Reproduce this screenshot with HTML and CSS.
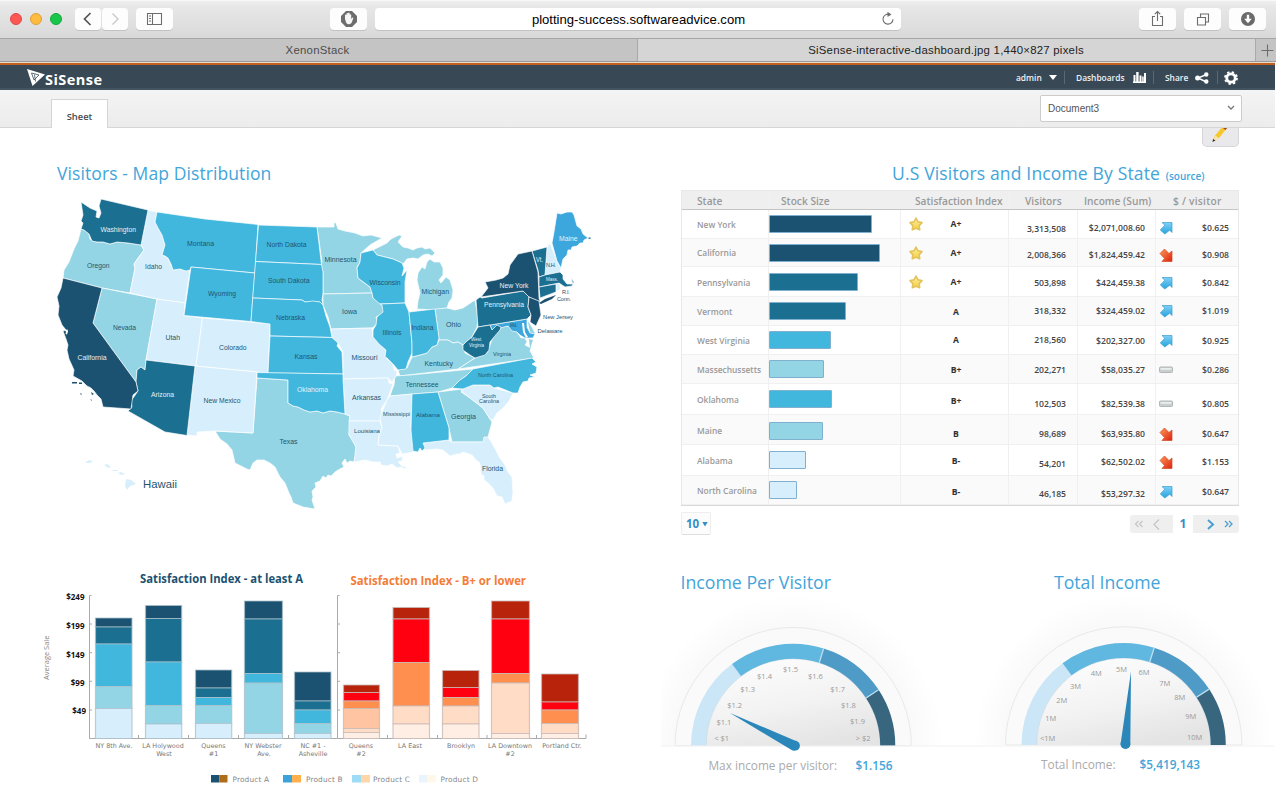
FILE: index.html
```html
<!DOCTYPE html>
<html lang="en">
<head>
<meta charset="utf-8">
<title>SiSense dashboard</title>
<link rel="stylesheet" href="styles.css">
</head>
<body>
<header class="toolbar">
  <div class="lights"><i class="red"></i><i class="amber"></i><i class="green"></i></div>
  <div class="pair">
    <span class="btn narrow"><svg width="26" height="22" viewBox="0 0 26 22"><path d="M15.500 5L9.500 11l6 6" class="stroke thick"/></svg></span>
    <span class="btn narrow"><svg width="26" height="22" viewBox="0 0 26 22"><path d="M10.500 5.500l5.500 5.500-5.500 5.500" class="stroke faint"/></svg></span>
  </div>
  <span class="btn side"><svg width="37" height="22" viewBox="0 0 37 22"><path d="M11.500 5.500h14v11h-14zM16.500 5.500v11M13 8h2M13 10.500h2M13 13h2" class="stroke"/></svg></span>
  <span class="btn hand"><svg width="37" height="22" viewBox="0 0 37 22"><path d="M16 3h6l5 5v6l-5 5h-6l-5-5V8z" fill="#6d6d6d"/><path d="M15 11V7q.8-1 1.500 0V5.500q.8-1 1.600 0V5q.8-.8 1.600 0v1.500q.8-.8 1.500.2V11l1-1.200q1-.5 1.200.3L21.500 15q-3 2.500-5.200 0z" fill="#f6f6f6"/></svg></span>
  <div class="url"><span>plotting-success.softwareadvice.com</span><svg class="reload" width="16" height="16" viewBox="0 0 16 16"><path d="M9.500 3.400A5 5 0 1 0 13 8.200" class="stroke"/><path d="M7.500.7l4 2.800-4 2.600z" fill="#6d6d6d"/></svg></div>
  <div class="actions">
    <span class="btn"><svg width="37" height="22" viewBox="0 0 37 22"><path d="M16 8.500h-2.500v9h10v-9H21M18.500 13V3.800M15.800 6.200l2.700-2.700 2.700 2.700" class="stroke"/></svg></span>
    <span class="btn"><svg width="37" height="22" viewBox="0 0 37 22"><path d="M13.500 9.500h8v7.500h-8zM16.500 9.500V6h8v8h-3" class="stroke"/></svg></span>
    <span class="btn"><svg width="37" height="22" viewBox="0 0 37 22"><circle cx="19" cy="11" r="7" fill="#6a6a6a"/><path d="M17.800 6.800h2.400v4h2.600L19 15.200l-3.800-4.400h2.600z" fill="#fff"/></svg></span>
  </div>
</header>
<nav class="tabs"><span class="tab">XenonStack</span><span class="tab active">SiSense-interactive-dashboard.jpg 1,440×827 pixels</span><span class="plus"><svg width="20" height="22" viewBox="0 0 20 22"><path d="M5.500 11.500h12M11.500 5.500v12" class="stroke"/></svg></span></nav>
<div class="app">
<div class="brandbar">
  <div class="brand"><svg width="19" height="20" viewBox="0 0 19 20"><path d="M0 1L18 6.500 5.500 18z" fill="#fff"/><path d="M4.500 5l7.500 2-5 5zM7.500 6.500l1 7" fill="none" stroke="#384955" stroke-width=".8"/></svg><b>SiSense</b></div>
  <div class="menu">
    <span class="m-admin">admin</span><svg class="caret" width="8" height="6" viewBox="0 0 8 6"><path d="M0 0h8L4 5z" fill="#fff"/></svg>
    <i class="sep"></i><span class="m-dash">Dashboards</span><svg width="13" height="11" viewBox="0 0 13 11"><path d="M0 9.500h13V11H0zM.5 3h2v6.500h-2zM3.200 0h2.400v9.500H3.200zM6.500 3.500h2v6h-2zM9.200 4.500h1.500v5H9.200zM11 1h2v8.500h-2z" fill="#fff"/></svg>
    <i class="sep"></i><span class="m-share">Share</span><svg width="14" height="12" viewBox="0 0 14 12"><path d="M11.500 2.500L3 6l8.500 4" stroke="#fff" stroke-width="1.400" fill="none"/><g fill="#fff"><circle cx="2.600" cy="6" r="2.500"/><circle cx="11.300" cy="2.500" r="2.200"/><circle cx="11.300" cy="9.500" r="2.200"/></g></svg>
    <i class="sep"></i><svg class="gear" width="14" height="14" viewBox="0 0 14 14"><circle cx="7" cy="7" r="4.200" fill="none" stroke="#fff" stroke-width="2.800"/><circle cx="7" cy="7" r="6" fill="none" stroke="#fff" stroke-width="1.800" stroke-dasharray="2.360"/></svg>
  </div>
</div>
<div class="sheetbar"><span class="sheet">Sheet</span><div class="select"><span>Document3</span><svg width="8" height="6" viewBox="0 0 8 6"><path d="M1 1l3 3 3-3" fill="none" stroke="#777" stroke-width="1.300"/></svg></div></div>
<main>
<section class="left">
<h2 class="map-title">Visitors - Map Distribution</h2>
<svg class="map" width="560" height="340" viewBox="50 190 560 340">
<g stroke="#fff" stroke-opacity=".85" stroke-width=".8" stroke-linejoin="round">
<g class="c3">
<path d="M81 229L84 230 89 234 90 239 92 241 97 242 103 242 110 244 117 242 128 243 141 245 144 250 138 258 134 264 135 268 130 293 102 288 63 278 64 270 69 262 74 249 78 241z"/>
<path d="M102 288L157 299 146 360 145 370 141 367 137 370 136 382 93 323z"/>
<path d="M317 227L334 227 334 222.500 336 223 338 229 345 231 355 233 363 236 371 235 382 238 370 245 361 253 360 262 357 267 358 278 363 282 370 287 372 293 323 294 323 272 320 266 322 262z"/>
<path d="M323 294L372 293 373 298 378 301 382 305 384 310 382 314 376 317 377 322 376 325 372 328 331 329 328 317 323 305z"/>
<path d="M257 378L288 380 288 403 293 406 298 407 304 410 310 412 317 411 323 413 330 411 337 412 345 414 350 416 349 435 353 440 356 447 356 454 354 462 350 461 347 463 345 459 342 463 344 467 338 470 335 472 331 476 328 475 326 478 323 476 320 481 315 483 316 487 312 491 313 497 312 500 315 509 303 507 293 503 291 497 289 493 285 483 280 477 275 467 270 463 264 460 257 460 253 463 250 470 247 469 235 463 232 450 227 444 220 439 215 431 253 433z"/>
<path d="M373 250L387 243 391 239 399 235 402 236 398 242 403 247 408 248 413 250 417 248 422 247 425 249 430 248 435 253 432 256 428 254 423 255 418 259 413 258 407 259 403 264 402 263 393 259 377 255z"/>
<path d="M417 309L418 301 420 293 417 280 418 273 422 267 425 269 427 262 430 259 434 262 440 262 443 268 443 275 439 280 441 283 446 277 450 280 453 290 452 298 449 302 447 308 435 310z"/>
<path d="M435 309L447 308 455 310 463 308 475 300 478 318 477 327 472 337 467 341 463 345 458 342 453 343 448 340 439 340z"/>
<path d="M412 357L420 355 427 353 432 347 437 345 439 340 448 340 453 343 458 342 463 345 465 353 475 358 458 369 400 376 398 370 407 368z"/>
<path d="M395 376L410 375 473 369 466 376 460 380 452 388 438 392 390 396 392 390 394 385z"/>
<path d="M458 369L475 358 487 353 493 337 500 327 508 326 517 332 521 338 525 338 527 342 525 345 531 348 530 351 534 358z"/>
<path d="M438 392L463 389 461 392 470 398 483 408 490 419 492 422 488 437 483 442 452 442 449 428z"/>
<path d="M527 319L532 327 535 333 534 336 530 334z"/>
</g>
<g class="c4">
<path d="M148 210L157 212 155 222 162 235 165 245 162 255 168 258 173 270 180 269 190 270 185 303 157 299 130 293 135 268 134 264 144 250 141 245z"/>
<path d="M157 299L185 303 184 315.500 202.500 318 196 366 146 360z"/>
<path d="M202.500 318L251 322 270 324 268 373 196 366z"/>
<path d="M195 366L257 372 253 433 215 431 197 432 197 436 187 435z"/>
<path d="M331 329L372 328 373 337 379 344 386 350 385 357 393 364 394 370 397 371 396 376 392 382 388 378 343 379 343 352 338 343 332 337z"/>
<path d="M343 379L388 378 389 383 393 384 387 400 381 409 382 413 380 421 349 421 350 416 345 414z"/>
<path d="M349 421L380 421 382 428 379 436 378 445 398 446 400 453 396 454 397 458 403 456 402 461 398 462 402 466 407 467 405 469 401 467 397 468 392 464 387 466 381 465 380 462 373 462 365 460 354 462 356 447 349 435z"/>
<path d="M390 396L412 394 411 427 414 452 402 454 398 446 378 445 379 436 382 428 380 417 387 400z"/>
<path d="M423 443L449 440 452 442 483 442 484 437 488 437 492 443 500 458 505 465 508 472 512 477 513 492 512 501 505 504 502 497 497 496 493 488 487 482 484 480 484 476 481 474 480 463 476 460 472 455 463 452 460 454 457 454 450 456 443 450 437 449 424 450z"/>
<path d="M461 391L466 387 473 385 490 385 494 388 513 393 509 401 503 408 497 413 493 420 490 419 483 408 470 398z"/>
<path d="M547 247L550 243 557 261 561 268 560 273 545 275z"/><path d="M556 283L560 284 560 290 556 291z"/>
</g>
<g class="c2">
<path d="M157 212L205 219 258 224.500 255 273 191 267 190 270 186 271 180 269 173 270 171 264 168 258 165 256 162 255 165 245 162 235 158 228 155 222z"/>
<path d="M191 267L255 273 251 321.500 184 315.500z"/>
<path d="M258.500 225L317 227 321.500 264.500 255.500 261.500z"/>
<path d="M255.500 261.500L321.500 264.500 323 272 323 293 322 300 323 305 320 302 313 302 305 302 302 300 252.700 298z"/>
<path d="M252.700 298L302 300 305 302 313 301 320 302 323 305 326 316 330 327 332 337.500 270 336 270 324 251 321.500z"/>
<path d="M270 336L332 337.500 338 343 337 346 342 352 343 374 268 373z"/>
<path d="M257 372.500L343 374 343 379 345 414 337 412 330 411 323 413 317 411 310 412 304 410 298 407 293 406 288 403 288 380 257 378z"/>
<path d="M361 253L373 250 377 255 393 259 402 263 404 268 402 276 407 270 405 282 405 303 380 304 373 298 372 293 370 287 358 278 357 268 360 262z"/>
<path d="M380 304L405 303 409 312 412 343 412 353 408 362 406 369 398 370 393 364 387 358 385 357 386 350 379 344 373 337 373 330 376 325 377 317 383 312 382 305z"/>
<path d="M409 312L435 309 439 338 437 345 432 347 427 353 420 355 412 357 412 343z"/>
<path d="M412 394L438 392 449 428 449 440 423 443 425 448 422 451 420 448 418 452 413 451 411 430z"/>
<path d="M452 388L460 380 466 376 473 369 532 358 536 362 532 364 537 367 536 373 530 375 535 377 529 378 528 381 523 382 520 387 518 393 513 393 498 387 494 388 490 385 473 385 463 389z"/>
</g>
<g class="cm"><path d="M552 243L554 232 557 213 561 214 567 212 572 212 574 215 577 226 581 229 583 234 588 238 584 240 583 243 580 243 577 246 572 247 571 250 568 250 567 255 563 259 561 268 557 261z"/>
<path d="M490 325L527 319 527 327 530 333 535 334 533 338 525 338 520 335 517 332 512 331 508 326 500 328 492 330z"/></g>
<g class="c1">
<path d="M81 202L84 204 90 208 97 211 96 217 99 218 101 213 99 206 101 199 148 210 141 245 128 243 117 242 110 244 103 242 97 242 92 241 89 234 84 230 81 229 83 223 81 221 83 215z"/>
<path d="M146 360L195 366 187 435.500 165 432 128 411 132 407 131 401 138 391 136 382 137 370 141 367 145 370z"/>
<path d="M476 300L480 297 482 298 523 291 529 297 528 307 531 315 527 319 478 327z"/>
<path d="M478 327L490 325 492 330 497 325 501 327 500 330 494 337 490 342 489 350 485 355 475 358 470 355 463 350 463 345 467 341 472 337z"/>
<path d="M532 251L547 247 545 275 539 277 538 270z"/>
<path d="M539 277L545 275 560 272 563 275 563 279 567 284 573 284 571 278 574 282 572 286 565 287 559 283 539 287z"/>
<path d="M539 287L556 284 556 292 540 298z"/>
</g>
<g class="c0">
<path d="M63 278L102 288 93 323 136 382 138 391 133 395 131 409 103 407 101 399 97 395 94 391 91 388 87 386 82 381 73 376 74 370 69 359 67 350 68 345 66 339 63 331 66 330 62 325 60 320 58 315 59 306 57 297 61 288z"/>
<path d="M481 297L488 288 485 282 496 280 503 278 508 274 510 265 518 254 532 251 538 272 539 298 540 302 529 297 523 291z"/>
<path d="M529 297L539 301 541 315 536 326 530 322 531 315 528 307z"/>
</g>
</g>
<path class="c0" d="M539 303l6-4 11-4-4 4-11 5zM72 382h5v1.500h-5zM79 382.500h3v1.500h-3zM80 393l2 1-1 1zM91 392l3 2-2 1zM90 399l2 1v1z"/>
<path class="c1" d="M588 238l2-.8 1 1-2 .8z"/><path fill="#fff" d="M65 330l2.500-.5.5 2-1 3-1.500-.5.500-2zM522 323h2l1 9 3 5-2 1-3-6z"/>
<path class="c3" d="M529 339l4 1-3 9z"/>
<path class="c4" d="M85 463l4-3 4 1-3 2zM104 465l3-1 4 3-3 1zM112 470h6v1h-5zM118 473l3-1 4 2-4 1zM126 479l5 1 5 4-6 2-3 4-2-4z"/>
<g class="ml">
<g class="lt"><text x="100.500" y="231.500" textLength="35.500" lengthAdjust="spacingAndGlyphs">Washington</text><text x="77.500" y="360" textLength="29" lengthAdjust="spacingAndGlyphs">California</text><text x="151" y="397" textLength="23" lengthAdjust="spacingAndGlyphs">Arizona</text><text x="297" y="391.500" textLength="31" lengthAdjust="spacingAndGlyphs">Oklahoma</text><text x="559" y="240.500" textLength="18.500" lengthAdjust="spacingAndGlyphs">Maine</text><text x="499.500" y="288" textLength="29" lengthAdjust="spacingAndGlyphs">New York</text><text x="484" y="307" textLength="40" lengthAdjust="spacingAndGlyphs">Pennsylvania</text><text x="536" y="261.500" textLength="7" lengthAdjust="spacingAndGlyphs">Vt.</text><text class="xs" x="546" y="281" textLength="12">Mass.</text><text class="xs" x="471" y="341">West</text><text class="xs" x="469" y="347" textLength="15" lengthAdjust="spacingAndGlyphs">Virginia</text></g>
<text x="87" y="268" textLength="22.500" lengthAdjust="spacingAndGlyphs">Oregon</text><text x="145" y="268.500" textLength="17" lengthAdjust="spacingAndGlyphs">Idaho</text><text x="187" y="246" textLength="27" lengthAdjust="spacingAndGlyphs">Montana</text><text x="208" y="295.500" textLength="28" lengthAdjust="spacingAndGlyphs">Wyoming</text><text x="113" y="329.500" textLength="23" lengthAdjust="spacingAndGlyphs">Nevada</text><text x="165.500" y="339.500" textLength="14.500" lengthAdjust="spacingAndGlyphs">Utah</text><text x="219" y="350" textLength="27.500" lengthAdjust="spacingAndGlyphs">Colorado</text><text x="203.500" y="403" textLength="37" lengthAdjust="spacingAndGlyphs">New Mexico</text>
<text x="266.500" y="247" textLength="40" lengthAdjust="spacingAndGlyphs">North Dakota</text><text x="268" y="283" textLength="41.500" lengthAdjust="spacingAndGlyphs">South Dakota</text><text x="276" y="320" textLength="29" lengthAdjust="spacingAndGlyphs">Nebraska</text><text x="294.500" y="359" textLength="23" lengthAdjust="spacingAndGlyphs">Kansas</text><text x="279.500" y="444" textLength="18" lengthAdjust="spacingAndGlyphs">Texas</text><text x="324.500" y="262" textLength="32" lengthAdjust="spacingAndGlyphs">Minnesota</text><text x="342" y="313.500" textLength="15" lengthAdjust="spacingAndGlyphs">Iowa</text><text x="369.500" y="284.500" textLength="31" lengthAdjust="spacingAndGlyphs">Wisconsin</text><text x="382.500" y="335" textLength="19" lengthAdjust="spacingAndGlyphs">Illinois</text><text x="411.500" y="330" textLength="22" lengthAdjust="spacingAndGlyphs">Indiana</text><text x="351.500" y="360" textLength="26" lengthAdjust="spacingAndGlyphs">Missouri</text><text x="352" y="399.500" textLength="29" lengthAdjust="spacingAndGlyphs">Arkansas</text><text class="s" x="354" y="432.500" textLength="26" lengthAdjust="spacingAndGlyphs">Louisiana</text><text class="s" x="383" y="416" textLength="27" lengthAdjust="spacingAndGlyphs">Mississippi</text><text class="s" x="416" y="416.500" textLength="24" lengthAdjust="spacingAndGlyphs">Alabama</text><text x="451" y="419" textLength="25" lengthAdjust="spacingAndGlyphs">Georgia</text><text x="482" y="470.500" textLength="21" lengthAdjust="spacingAndGlyphs">Florida</text><text x="421.500" y="293.500" textLength="27.500" lengthAdjust="spacingAndGlyphs">Michigan</text><text x="446" y="326.500" textLength="15" lengthAdjust="spacingAndGlyphs">Ohio</text><text x="424.500" y="366" textLength="28.500" lengthAdjust="spacingAndGlyphs">Kentucky</text><text x="405.500" y="387" textLength="33" lengthAdjust="spacingAndGlyphs">Tennessee</text><text class="s" x="493" y="356" textLength="18" lengthAdjust="spacingAndGlyphs">Virginia</text><text class="s" x="478" y="377" textLength="35" lengthAdjust="spacingAndGlyphs">North Carolina</text><text class="s" x="482" y="397.500" textLength="14" lengthAdjust="spacingAndGlyphs">South</text><text class="s" x="479" y="402.500" textLength="20" lengthAdjust="spacingAndGlyphs">Carolina</text><text class="s" x="546" y="266.500" textLength="10">N.H.</text><text class="s" x="562" y="294" textLength="8">R.I.</text><text class="s" x="557" y="301" textLength="14">Conn.</text><text class="s" x="543" y="318.500" textLength="30" lengthAdjust="spacingAndGlyphs">New Jersey</text><text class="s" x="537.500" y="332.500" textLength="25" lengthAdjust="spacingAndGlyphs">Delaware</text><text class="xs" x="510" y="327">Md.</text>
<text class="hi" x="143" y="487.500" textLength="34" lengthAdjust="spacingAndGlyphs">Hawaii</text>
</g>
</svg>
<svg class="chart" width="580" height="235" viewBox="30 560 580 235">
<g class="ct"><text x="140" y="583" fill="#1c5271" textLength="163" lengthAdjust="spacingAndGlyphs">Satisfaction Index - at least A</text><text x="350.500" y="584.500" fill="#f47c35" textLength="175.500" lengthAdjust="spacingAndGlyphs">Satisfaction Index - B+ or lower</text></g>
<path d="M91.500 595.500H89.500V738.500H337.500V595.500h2M337.500 738.500H586v-4M89.500 624h2.500M89.500 652.700h2.500M89.500 681.300h2.500M89.500 710h2.500M337.500 624h2.500M337.500 652.700h2.500M337.500 681.300h2.500M337.500 710h2.500M138.500 738v-3M188.500 738v-3M238.500 738v-3M288.500 738v-3M387.500 738v-3M437.500 738v-3M487 738v-3M536.500 738v-3" fill="none" stroke="#aaa" stroke-width="1"/>
<g class="cy"><text x="84.500" y="600">$249</text><text x="84.500" y="628.500">$199</text><text x="84.500" y="658">$149</text><text x="84.500" y="685.500">$99</text><text x="86" y="713.500">$49</text></g>
<text class="avg" transform="translate(48.500 680) rotate(-90)" textLength="44.500">Average Sale</text>
<g stroke="#a9bfca" stroke-opacity=".75" stroke-width="1.200">
<g class="c0"><path d="M95.500 618H132v9H95.500zM145.500 605.500h36.200v13h-36.200zM195.500 670h36.200v18h-36.200zM244.500 601h38v18h-38zM294.500 672h36.500v29h-36.500z"/></g>
<g class="c1"><path d="M95.500 627H132v17H95.500zM145.500 618.500h36.200V662h-36.200zM195.500 688h36.200v9.500h-36.200zM244.500 619h38v54.500h-38zM294.500 701h36.500v9h-36.500z"/></g>
<g class="c2"><path d="M95.500 644H132v42.500H95.500zM145.500 662h36.200v43.500h-36.200zM195.500 697.500h36.200v8h-36.200zM244.500 673.500h38v9.500h-38zM294.500 710h36.500v13.500h-36.500z"/></g>
<g class="c3"><path d="M95.500 686.500H132v22H95.500zM145.500 705.500h36.200V724h-36.200zM195.500 705.500h36.200v18h-36.200zM244.500 683h38v50.500h-38zM294.500 723.500h36.500v10h-36.500z"/></g>
<g class="c4"><path d="M95.500 708.500H132v30H95.500zM145.500 724h36.200v14.500h-36.200zM195.500 723.500h36.200v15h-36.200zM244.500 733.500h38v5h-38zM294.500 733.500h36.500v5h-36.500z"/></g>
</g>
<g stroke="#c9b9b5" stroke-opacity=".8" stroke-width="1.200">
<path fill="#b8230c" d="M343.500 685h36v7.500h-36zM393 607.500h36.500V619H393zM442.500 670.500H479v17h-36.500zM491.500 601h38v18h-38zM541.500 674h37v28h-37z"/>
<path fill="#ff0010" d="M343.500 692.500h36v8.500h-36zM393 619h36.500v43.500H393zM442.500 687.500H479v10h-36.500zM491.500 619h38v54.500h-38zM541.500 702h37v8h-37z"/>
<path fill="#ff8f4e" d="M343.500 701h36v7.500h-36zM393 662.500h36.500V706H393zM442.500 697.500H479v8.500h-36.500zM491.500 673.500h38v9.500h-38zM541.500 710h37v13.500h-37z"/>
<path fill="#ffc5a3" d="M343.500 708.500h36v20h-36z"/>
<path fill="#ffdcc6" d="M343.500 728.500h36v4h-36zM393 706h36.500v18H393zM442.500 706H479v18h-36.500zM491.500 683h38v50.500h-38zM541.500 723.500h37v10h-37z"/>
<path fill="#ffeee3" d="M343.500 732.500h36v6h-36zM393 724h36.500v14.500H393zM442.500 724H479v14.500h-36.500zM491.500 733.500h38v5h-38zM541.500 733.500h37v5h-37z"/>
</g>
<g class="cx"><text x="114" y="748">NY 8th Ave.</text><text x="163" y="748">LA Holywood</text><text x="164" y="756">West</text><text x="213.500" y="748">Queens</text><text x="213.500" y="756">#1</text><text x="263" y="748">NY Webster</text><text x="264" y="756">Ave.</text><text x="313" y="748">NC #1 -</text><text x="313" y="756">Asheville</text><text x="361" y="748">Queens</text><text x="361" y="756">#2</text><text x="410" y="748">LA East</text><text x="461" y="748">Brooklyn</text><text x="510" y="748">LA Downtown</text><text x="510" y="756">#2</text><text x="562" y="748">Portland Ctr.</text></g>
<path fill="#1c5271" d="M211 775h8.500v7.500H211z"/><path fill="#b06d19" d="M219.500 775h8v7.500h-8z"/><path fill="#3ba3dc" d="M283 775h9v7.500h-9z"/><path fill="#ffb04b" d="M292 775h9v7.500h-9z"/><path fill="#9ddcf4" d="M352 775h9v7.500h-9z"/><path fill="#ffd7a6" d="M361 775h9v7.500h-9z"/><path fill="#e9f4fd" d="M419 775h8.500v7.500H419z"/><path fill="#fff8e8" d="M427.500 775h8.500v7.500h-8.500z"/>
<g class="lg"><text x="232.500" y="782" textLength="36.500">Product A</text><text x="306" y="782" textLength="36.500">Product B</text><text x="373" y="782" textLength="37">Product C</text><text x="440.500" y="782" textLength="37.500">Product D</text></g>
</svg>
</section>
<section class="right">
<div class="edit"><svg width="37" height="20" viewBox="0 0 37 20"><path d="M10 12l2-4.500L18.500 0h5.500l-8 10z" fill="#f7c62b"/><path d="M12 7.500l4 2.500-1.500 2-4 1z" fill="#f6e3b5"/><path d="M10 11l2.500 1.500L9.500 14z" fill="#333"/><path d="M20 0h4l-1.500 2z" fill="#a33b35"/></svg></div>
<h2 class="table-title"><span>U.S Visitors and Income By State</span> <small>(source)</small></h2>
<svg width="0" height="0" class="defs"><defs>
<linearGradient id="gb" x2="0" y2="1"><stop offset="0" stop-color="#7fd0f7"/><stop offset="1" stop-color="#27a3dd"/></linearGradient><linearGradient id="gr" x2="1" y2="1"><stop offset="0" stop-color="#ff9a55"/><stop offset="1" stop-color="#dc2210"/></linearGradient><linearGradient id="gs" x2="0" y2="1"><stop offset="0" stop-color="#ffee9a"/><stop offset="1" stop-color="#f3cf42"/></linearGradient>
<symbol id="up" viewBox="0 0 14 14"><path d="M3 1.500h10v10l-2.300-2.300L5.800 13 1.300 9l4.500-4.800z" fill="url(#gb)" stroke="#3b9dcf" stroke-width=".7"/></symbol>
<symbol id="down" viewBox="0 0 14 14"><path d="M5.500 1l4.500 4.500L13 3v10.500H3l2.500-3L1 5.500z" fill="url(#gr)" stroke="#cf4a25" stroke-width=".7"/></symbol>
<symbol id="flat" viewBox="0 0 14 14"><rect x=".5" y="4" width="13" height="5.500" rx="1" fill="#c9cfcf" stroke="#b1b7b7"/><path d="M1.500 5h11v1.800h-11z" fill="#e9eded"/></symbol>
<symbol id="star" viewBox="0 0 14 14"><path d="M7 1.200l2 3.600 4 .8-2.800 3 .5 4.200L7 11.300l-3.700 1.500.5-4.200-2.800-3 4-.8z" fill="url(#gs)" stroke="#e3c25c" stroke-width="1.600" stroke-linejoin="round"/></symbol>
</defs></svg>
<div class="table">
<div class="row head"><span class="ha">State</span><span class="hb">Stock Size</span><span class="hc">Satisfaction Index</span><span class="hd">Visitors</span><span class="he">Income (Sum)</span><span class="hf">$ / visitor</span></div>
<div class="row h28"><span class="st">New York</span><span><i class="bar b0" style="width:103px"></i></span><span class="gd"><svg><use href="#star"/></svg><b>A+</b></span><span class="vi n5">3,313,508</span><span class="in n4">$2,071,008.60</span><span class="pv n4"><svg><use href="#up"/></svg><b>$0.625</b></span></div>
<div class="row alt"><span class="st">California</span><span><i class="bar b0" style="width:111px"></i></span><span class="gd"><svg><use href="#star"/></svg><b>A+</b></span><span class="vi n2">2,008,366</span><span class="in n2">$1,824,459.42</span><span class="pv n2"><svg><use href="#down"/></svg><b>$0.908</b></span></div>
<div class="row"><span class="st n1">Pennsylvania</span><span><i class="bar b1" style="width:89px"></i></span><span class="gd"><svg><use href="#star"/></svg><b>A+</b></span><span class="vi n1">503,898</span><span class="in n1">$424,459.38</span><span class="pv n1"><svg><use href="#up"/></svg><b>$0.842</b></span></div>
<div class="row alt h30"><span class="st">Vermont</span><span><i class="bar b1" style="width:77px"></i></span><span class="gd n1"><b>A</b></span><span class="vi">318,332</span><span class="in">$324,459.02</span><span class="pv"><svg><use href="#up"/></svg><b>$1.019</b></span></div>
<div class="row h28"><span class="st">West Virginia</span><span><i class="bar b2" style="width:62px"></i></span><span class="gd"><b>A</b></span><span class="vi">218,560</span><span class="in n1">$202,327.00</span><span class="pv n1"><svg><use href="#up"/></svg><b>$0.925</b></span></div>
<div class="row alt h30"><span class="st">Massechussetts</span><span><i class="bar b3" style="width:55px"></i></span><span class="gd n1"><b>B+</b></span><span class="vi n1">202,271</span><span class="in n1">$58,035.27</span><span class="pv n1"><svg><use href="#flat"/></svg><b>$0.286</b></span></div>
<div class="row h30"><span class="st">Oklahoma</span><span><i class="bar b2" style="width:63px"></i></span><span class="gd n2"><b>B+</b></span><span class="vi n5">102,503</span><span class="in n5">$82,539.38</span><span class="pv n5"><svg><use href="#flat"/></svg><b>$0.805</b></span></div>
<div class="row alt h31"><span class="st n1">Maine</span><span class="n1"><i class="bar b3" style="width:54px"></i></span><span class="gd n4"><b>B</b></span><span class="vi n4">98,689</span><span class="in n4">$63,935.80</span><span class="pv n4"><svg><use href="#down"/></svg><b>$0.647</b></span></div>
<div class="row h30"><span class="st">Alabama</span><span><i class="bar b4" style="width:37px"></i></span><span class="gd n1"><b>B-</b></span><span class="vi n4">54,201</span><span class="in n2">$62,502.02</span><span class="pv n2"><svg><use href="#down"/></svg><b>$1.153</b></span></div>
<div class="row alt h30"><span class="st">North Carolina</span><span><i class="bar b4" style="width:28px"></i></span><span class="gd n2"><b>B-</b></span><span class="vi n4">46,185</span><span class="in n4">$53,297.32</span><span class="pv n2"><svg><use href="#up"/></svg><b>$0.647</b></span></div>
</div>
<div class="pager"><span class="size">10 <svg width="6" height="6" viewBox="0 0 6 6"><path d="M.3 1h5.400L3 5.500z" fill="#348ec6"/></svg></span>
<div class="pages"><svg width="43" height="18" viewBox="0 0 43 18"><path d="M8.500 6L5.500 9l3 3M12.500 6L9.500 9l3 3M29 4.500L24 9.500l5 5" class="pgoff"/></svg><b>1</b><svg width="46" height="18" viewBox="0 0 46 18"><path d="M15 5l5 4.500-5 4.500" class="pgon big"/><path d="M32 6l3 3-3 3M36 6l3 3-3 3" class="pgon"/></svg></div></div>
<svg class="gauges" width="614" height="235" viewBox="661 560 614 235">
<defs><radialGradient id="halo" gradientUnits="userSpaceOnUse" cx="793" cy="745" r="150"><stop offset=".7" stop-color="#f7f7f7"/><stop offset="1" stop-color="#fff"/></radialGradient>
<linearGradient id="face" x1=".2" y1="0" x2=".6" y2="1"><stop offset="0" stop-color="#fdfdfd"/><stop offset=".55" stop-color="#f3f3f3"/><stop offset="1" stop-color="#e4e4e4"/></linearGradient>
<g id="dial"><path d="M643 745.700a150 150 0 0 1 300 0z" fill="url(#halo)"/><path d="M675 745.700a118 118 0 0 1 236.400 0z" fill="#fafafa" stroke="#e9e9e9"/><path d="M704 745.700a89 89 0 0 1 178.400 0z" fill="url(#face)"/><path d="M704.200 745.700a89 89 0 0 1 178 0" fill="none" stroke="#c3d2da" stroke-width="5" opacity=".6"/>
<path fill="#cbe6f6" d="M691 745.700A102.200 102.200 0 0 1 732 664L741 676A87 87 0 0 0 706 745.700z"/><path fill="#60b7e0" d="M732 664A102 102 0 0 1 823.700 648.400L819.200 662.700A87 87 0 0 0 741 676z"/><path fill="#4f9bc8" d="M823.700 648.400A102 102 0 0 1 878.600 689.800L866 698A87 87 0 0 0 819.200 662.700z"/><path fill="#38667f" d="M878.600 689.800A102 102 0 0 1 895.300 745.700H880.200A87 87 0 0 0 866 698z"/><path d="M823.700 648.400L819.200 662.700M878.600 689.800L866 698" stroke="#b9dff2" stroke-width="1.300"/></g></defs>
<use href="#dial"/><use href="#dial" x="330.500" y="-.7"/>
<path d="M661 746H1275" stroke="#f1f1f1"/>
<path fill="#2b87ba" d="M730 713L796.500 741.300A5.200 5.200 0 0 1 792.500 750.500z"/><circle cx="795" cy="745.700" r="4.900" fill="#2b87ba"/>
<path fill="#2b87ba" d="M1131 671.500L1130.300 745A5 5 0 0 1 1120.600 744z"/><circle cx="1125.400" cy="744" r="4.900" fill="#2b87ba"/>
<g class="gt"><text x="680.500" y="589" textLength="150.500" lengthAdjust="spacingAndGlyphs">Income Per Visitor</text><text x="1054" y="589" textLength="106.500" lengthAdjust="spacingAndGlyphs">Total Income</text></g>
<g class="gl"><text x="721.600" y="741">&lt; $1</text><text x="723.900" y="724.500">$1.1</text><text x="734.600" y="708">$1.2</text><text x="747.600" y="691.500">$1.3</text><text x="764.500" y="679">$1.4</text><text x="790.500" y="672">$1.5</text><text x="815.400" y="679">$1.6</text><text x="837.600" y="691.500">$1.7</text><text x="848.300" y="707.500">$1.8</text><text x="857.500" y="723.500">$1.9</text><text x="863.200" y="740.500">&gt; $2</text>
<text x="1047.700" y="741">&lt;1M</text><text x="1050.700" y="721">1M</text><text x="1061.800" y="703">2M</text><text x="1075.600" y="689">3M</text><text x="1096.300" y="675.500">4M</text><text x="1121.500" y="672">5M</text><text x="1144" y="675">6M</text><text x="1164.800" y="685.500">7M</text><text x="1179.700" y="700">8M</text><text x="1190.800" y="719">9M</text><text x="1194.600" y="739.500">10M</text></g>
<g class="gf"><text x="708.500" y="770" textLength="128.500" lengthAdjust="spacingAndGlyphs">Max income per visitor:</text><text class="val" x="855.500" y="770" textLength="37" lengthAdjust="spacingAndGlyphs">$1.156</text><text x="1041" y="769" textLength="74.500" lengthAdjust="spacingAndGlyphs">Total Income:</text><text class="val" x="1139.500" y="769" textLength="60.500" lengthAdjust="spacingAndGlyphs">$5,419,143</text></g>
</svg>
</section>
</main>
</div>
</body>
</html>
```
FILE: styles.css
```css
* { box-sizing: border-box; }
body { margin: 0; width: 1276px; height: 795px; overflow: hidden; background: #fff; font-family: "Open Sans", "Noto Sans", sans-serif; }
svg { display: block; flex: none; }
.stroke { fill: none; stroke: #6d6d6d; stroke-width: 1.1; }
.stroke.thick { stroke-width: 1.7; stroke: #555; }
.stroke.faint { stroke: #c9c9c9; stroke-width: 1.4; }

.toolbar { display: flex; align-items: center; height: 38px; padding: 0 10px 1px; background: linear-gradient(#efefef, #e7e7e7 15%, #d9d9d9); border-top: 1px solid #f8f8f8; }
.lights { display: flex; gap: 8px; width: 65px; }
.lights i { width: 12px; height: 12px; border-radius: 50%; border: 1px solid; }
.red { background: #fc5753; border-color: #df4744 !important; }
.amber { background: #fdbc40; border-color: #de9f34 !important; }
.green { background: #18c64a; border-color: #15a83b !important; }
.pair { display: flex; gap: 1px; margin-right: 8px; }
.btn { width: 37px; height: 22px; background: #fdfdfd; border-radius: 4px; box-shadow: 0 1px 0 #c2c2c2; }
.btn.narrow { width: 26px; }
.hand { margin-left: 157px; }
.url { display: flex; align-items: center; width: 526px; height: 22px; margin-left: 8px; padding-right: 5px; background: #fff; border-radius: 4px; box-shadow: 0 1px 0 #c2c2c2; font: 13.1px "Liberation Sans", Arial, sans-serif; }
.url span { flex: 1; text-align: center; padding-left: 22px; }
.actions { display: flex; gap: 8px; margin-left: auto; }

.tabs { display: flex; height: 24px; border-top: 1px solid #a6a6a6; border-bottom: 1px solid #999; font: 11.4px/23px "Liberation Sans", Arial, sans-serif; letter-spacing: .24px; color: #4c4c4c; background: #c4c4c4; }
.tab { width: 637px; padding-right: 2px; text-align: center; }
.tab.active { width: 619px; padding: 0 1px 0 0; background: #d5d5d5; border: solid #a9a9a9; border-width: 0 1px; color: #222; }

.app { width: 1275px; padding-top: 1px; background: linear-gradient(#e9dccb 1px, #fff 1px); }
.brandbar { display: flex; align-items: center; height: 27px; padding: 0 37px 0 27px; background: #384955; border-top: 2px solid #c25f1f; box-shadow: inset 0 -2px #43535f; }
.brand { display: flex; align-items: center; color: #fff; }
.brand b { margin-left: -1px; font-size: 14.5px; line-height: 18px; padding-top: 4px; letter-spacing: .45px; }
.menu { display: flex; align-items: center; margin-left: auto; height: 20px; font-size: 8.4px; font-weight: 600; color: #eef2f4; }
.m-admin { width: 33px; }
.menu .sep { width: 1px; height: 13px; background: #5b6973; margin: 0 11px 0 7px; }
.m-dash { width: 57px; }
.m-share { width: 30px; }
.menu .sep:last-of-type { margin: 0 0 0 8px; }
.menu .gear { margin-left: 6px; }
.sheetbar { display: flex; justify-content: space-between; height: 38px; padding: 5px 33px 0 51px; background: linear-gradient(#f4f4f4, #ececec); border-bottom: 1px solid #d6d6d6; }
.sheet { width: 57px; height: 29px; margin-top: 4px; background: #fff; border: 1px solid #d5d5d5; border-bottom: 0; font-size: 9.4px; font-weight: 600; line-height: 34px; text-align: center; color: #4a4a4a; }
.select { display: flex; justify-content: space-between; align-items: center; width: 202px; height: 27px; padding: 0 6px 1px 7px; background: #fff; border: 1px solid #ccc; border-radius: 2px; font: 10px "Liberation Sans", Arial, sans-serif; color: #555; }

main { display: flex; }
.left { width: 661px; }
.right { width: 614px; }
h2 { margin: 0; font-weight: 400; color: #43a5da; font-size: 17.5px; line-height: 24px; white-space: nowrap; }
.map-title { padding: 33px 0 0 57px; height: 62px; letter-spacing: .09px; }
.map { margin-left: 50px; }
.chart { margin: 30px 0 0 30px; }
.c0 { fill: #1c5271; } .c1 { fill: #1b6f91; } .c2 { fill: #41b7de; } .c3 { fill: #93d5e5; } .c4 { fill: #d7effc; } .cm { fill: #3ba7dc; }
.ml { font: 6.6px "Liberation Sans", Arial, sans-serif; fill: #1f5570; }
.ml .lt { fill: #e4f1f8; }
.ml .s { font-size: 5.6px; }
.ml .xs { font-size: 4.5px; }
.ml .hi { font-size: 11px; }
.ct { font-size: 12.5px; font-weight: 700; }
.cy { font-size: 8px; font-weight: 700; text-anchor: end; fill: #111; }
.avg { font-size: 7.5px; fill: #888; }
.cx { font: 6.4px "DejaVu Sans", sans-serif; fill: #777; text-anchor: middle; }
.lg { font: 7.4px "DejaVu Sans", sans-serif; fill: #888; }

.edit { width: 37px; height: 19px; margin-left: 541px; background: #e9e9ec; border: solid #d5d5da; border-width: 0 1px 1px; border-radius: 0 0 5px 5px; }
.table-title { height: 43px; padding: 14px 0 0 231px; letter-spacing: .16px; }
.table-title small { margin-left: 1px; font-size: 10px; font-weight: 600; letter-spacing: 0; }
.defs { position: absolute; }
.table { width: 558px; height: 316px; margin-left: 20px; border: 1px solid #e8e8e8; border-bottom: 2px solid #d8d8d8; font-size: 8.6px; font-weight: 600; color: #444; }
.row { display: grid; grid-template-columns: 86px 132px 108px 69px 78px 83px; height: 29px; }
.row > span { display: flex; align-items: center; border-left: 1px solid #f0f0f0; }
.row > span:first-child { border-left: 0; }
.row.alt { background: #fafafa; border-top: 1px solid #f0f0f0; border-bottom: 1px solid #f0f0f0; }
.row.h28 { height: 28px; } .row.h30 { height: 30px; } .row.h31 { height: 31px; }
.row.head { height: 19px; background: #efefef; border-bottom: 1px solid #c4c4c4; font-size: 10.2px; color: #999; }
.row.head span { padding-top: 2px; }
.ha { padding-left: 15px; } .hb { padding-left: 12px; } .hc { padding-left: 14px; } .hd { padding-left: 16px; } .he { padding-left: 6px; } .hf { padding-left: 17px; letter-spacing: .25px; }
.row .st { padding-left: 15px; font-size: 8.4px; color: #999; white-space: nowrap; }
.bar { height: 18px; border: 1px solid #7fb0d0; border-radius: 1px; }
.b0 { background: #1c5271; } .b1 { background: #1b6f91; } .b2 { background: #41b7de; } .b3 { background: #93d5e5; } .b4 { background: #d7effc; }
.row b { font-weight: 700; }
.gd { justify-content: flex-end; padding-right: 46px; color: #333; }
.gd svg { width: 14px; height: 14px; margin-right: 27px; }
.gd b { width: 12px; text-align: center; }
.vi { justify-content: flex-end; padding-right: 11px; }
.in { justify-content: flex-end; padding-right: 10px; }
.pv { justify-content: space-between; padding: 0 9px 0 3px; }
.pv svg { width: 14px; height: 14px; }
.row .pv b { font-weight: 600; }
.row .n1 { padding-top: 2px; } .row .n2 { padding-top: 4px; } .row .n4 { padding-top: 8px; } .row .n5 { padding-top: 9px; }
.pager { display: flex; justify-content: space-between; width: 558px; height: 30px; padding-top: 6px; margin-left: 20px; }
.size { display: flex; align-items: center; gap: 3px; width: 30px; height: 23px; padding-left: 4px; border: 1px solid #eee; border-bottom-color: #ddd; border-radius: 2px; background: #fcfcfc; font-size: 11.5px; font-weight: 700; color: #348ec6; }
.pages { display: flex; align-items: center; height: 18px; margin-top: 3px; background: #efefef; border-radius: 3px; }
.pages b { width: 20px; height: 20px; background: #fff; font-size: 12px; line-height: 20px; text-align: center; color: #348ec6; }
.pgoff { fill: none; stroke: #c6c6c6; stroke-width: 1.3; }
.pgon { fill: none; stroke: #4a9fd0; stroke-width: 1.3; }
.pgon.big { stroke-width: 2; }
.gauges { margin-top: 24px; }
.gt { font-size: 18px; fill: #43a5da; }
.gl { font-size: 7.5px; fill: #999; text-anchor: middle; }
.gf { font-size: 12px; fill: #aaa; }
.gf .val { fill: #43a5da; font-weight: 600; }
```
